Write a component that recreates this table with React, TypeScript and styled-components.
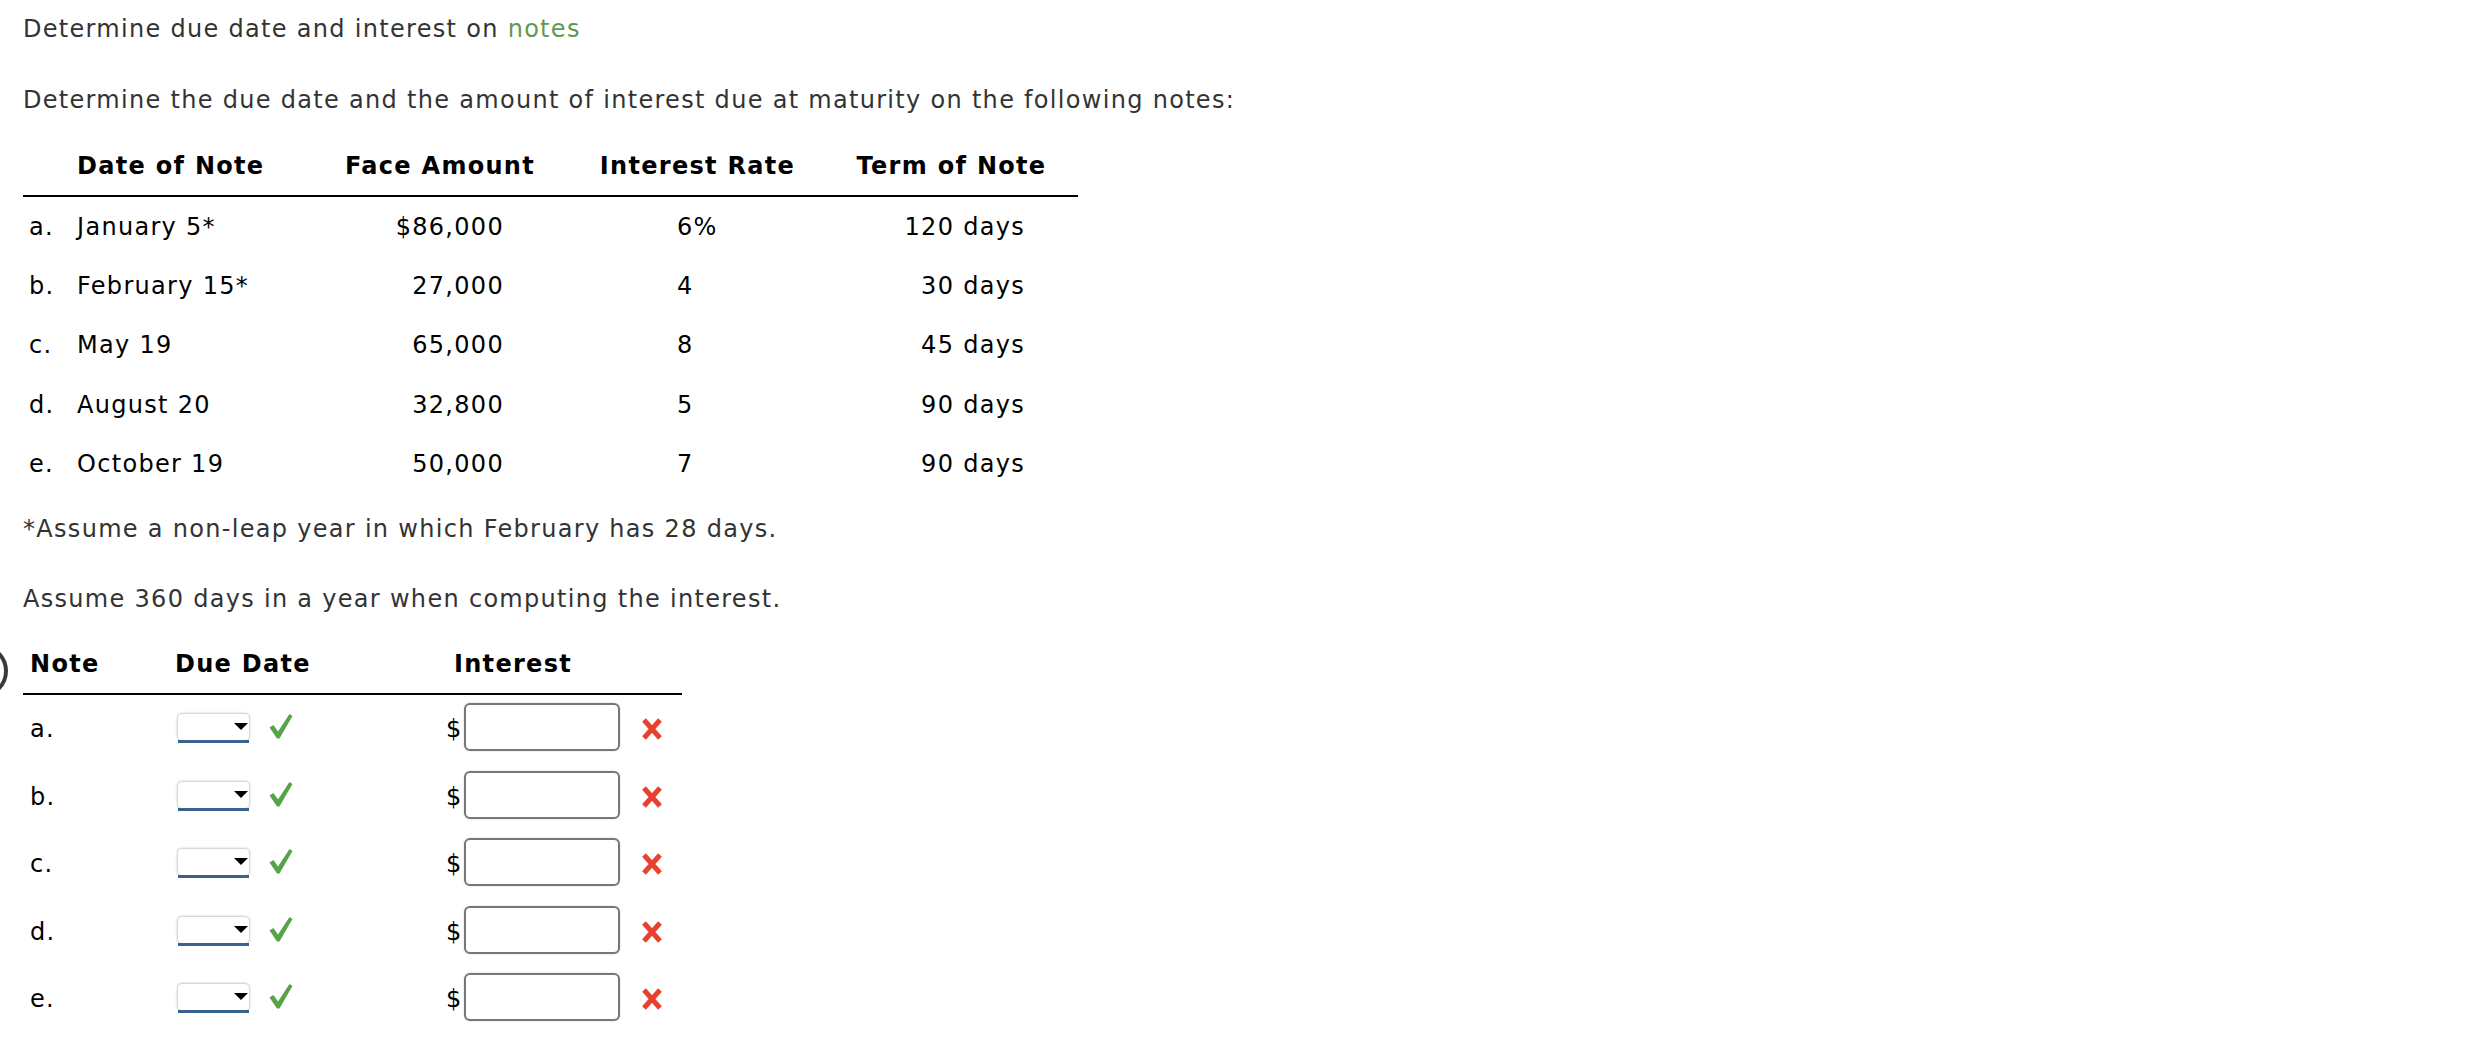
import React from "react";
import styled, { createGlobalStyle } from "styled-components";

const Global = createGlobalStyle`
  html, body { margin: 0; padding: 0; background: #fff; }
  body {
    font-family: "DejaVu Sans", Verdana, sans-serif;
    font-size: 24px;
    letter-spacing: 1.3px;
    color: #333;
  }
`;

const Page = styled.div`
  position: relative;
  padding: 14px 0 0 23px;
  width: 2467px;
  min-height: 1030px;
`;

const EdgeRing = styled.div`
  position: absolute;
  left: -46px;
  top: 644px;
  width: 46px;
  height: 46px;
  border: 4px solid #3a3a3a;
  border-radius: 50%;
`;

const Text = styled.p<{ $mt: number }>`
  margin: ${(p) => p.$mt}px 0 0 0;
  line-height: 30px;
  color: #333;
  white-space: nowrap;
`;

const Glossary = styled.span`
  color: #5e9a4e;
`;

const Table = styled.div<{ $cols: string; $width: number; $mt: number }>`
  display: grid;
  grid-template-columns: ${(p) => p.$cols};
  width: ${(p) => p.$width}px;
  margin-top: ${(p) => p.$mt}px;
  color: #000;
`;

const HeadCell = styled.div<{ $align: string; $pl?: number }>`
  font-weight: bold;
  line-height: 30px;
  padding: 0 0 14px ${(p) => p.$pl ?? 0}px;
  text-align: ${(p) => p.$align};
  border-bottom: 2px solid #000;
  white-space: nowrap;
`;

const Cell = styled.div<{ $h: number; $justify: string; $pl?: number; $pr?: number }>`
  height: ${(p) => p.$h}px;
  display: flex;
  align-items: center;
  justify-content: ${(p) => p.$justify};
  padding-left: ${(p) => p.$pl ?? 0}px;
  padding-right: ${(p) => p.$pr ?? 0}px;
  white-space: nowrap;
`;

const Letter = styled.span`
  display: inline-block;
  width: 48px;
`;

const Select = styled.div`
  position: relative;
  width: 71px;
  height: 26px;
  margin-top: -4px;
  background: #fff;
  border-radius: 4px;
  box-shadow: 0 0 3px rgba(0, 0, 0, 0.45);
  &::after {
    content: "";
    position: absolute;
    left: 0;
    right: 0;
    bottom: -3px;
    height: 3px;
    background: #3b6190;
  }
`;

const Arrow = styled.span`
  position: absolute;
  right: 1px;
  top: 9px;
  width: 0;
  height: 0;
  border-left: 7px solid transparent;
  border-right: 7px solid transparent;
  border-top: 7px solid #000;
`;

const Check = styled.svg`
  margin-left: 20px;
  margin-top: -6px;
`;

const Dollar = styled.span`
  color: #000;
  margin-right: 1px;
`;

const Input = styled.div`
  width: 152px;
  height: 44px;
  border: 2px solid #777;
  border-radius: 6px;
  background: #fff;
  box-shadow: 0 0 2px rgba(0, 0, 0, 0.2);
  margin-top: -4px;
`;

const Cross = styled.svg`
  margin-left: 21px;
`;

const rows1 = [
  ["a.", "January 5*", "$86,000", "6%", "120 days"],
  ["b.", "February 15*", "27,000", "4", "30 days"],
  ["c.", "May 19", "65,000", "8", "45 days"],
  ["d.", "August 20", "32,800", "5", "90 days"],
  ["e.", "October 19", "50,000", "7", "90 days"],
];

const CheckIcon = () => (
  <Check width="24" height="26" viewBox="0 0 24 26">
    <path d="M0.5 14.5 L4.5 12 L9 18.5 L20.5 1 L23.5 3 L10.5 25.5 L8 25.5 Z" fill="#56a447" />
  </Check>
);

const CrossIcon = () => (
  <Cross width="22" height="22" viewBox="0 0 22 22">
    <path d="M3 2 L19 20 M19 2 L3 20" stroke="#e8412e" strokeWidth="5" strokeLinecap="butt" />
  </Cross>
);

export default function App() {
  return (
    <>
      <Global />
      <Page>
        <EdgeRing />
        <Text $mt={0}>
          Determine due date and interest on <Glossary>notes</Glossary>
        </Text>
        <Text $mt={41}>
          Determine the due date and the amount of interest due at maturity on the following notes:
        </Text>

        <Table $cols="287px 260px 255px 253px" $width={1055} $mt={36}>
          <HeadCell $align="left" $pl={54}>Date of Note</HeadCell>
          <HeadCell $align="center">Face Amount</HeadCell>
          <HeadCell $align="center">Interest Rate</HeadCell>
          <HeadCell $align="center">Term of Note</HeadCell>
          {rows1.map((r) => (
            <React.Fragment key={r[0]}>
              <Cell $h={59.3} $justify="flex-start" $pl={6}>
                <Letter>{r[0]}</Letter>
                {r[1]}
              </Cell>
              <Cell $h={59.3} $justify="flex-end" $pr={66}>{r[2]}</Cell>
              <Cell $h={59.3} $justify="flex-start" $pl={107}>{r[3]}</Cell>
              <Cell $h={59.3} $justify="flex-end" $pr={53}>{r[4]}</Cell>
            </React.Fragment>
          ))}
        </Table>

        <Text $mt={21}>*Assume a non-leap year in which February has 28 days.</Text>
        <Text $mt={40}>Assume 360 days in a year when computing the interest.</Text>

        <Table $cols="147px 250px 262px" $width={659} $mt={35}>
          <HeadCell $align="left" $pl={7}>Note</HeadCell>
          <HeadCell $align="left" $pl={5}>Due Date</HeadCell>
          <HeadCell $align="left" $pl={34}>Interest</HeadCell>
          {["a.", "b.", "c.", "d.", "e."].map((l) => (
            <React.Fragment key={l}>
              <Cell $h={67.5} $justify="flex-start" $pl={7}>{l}</Cell>
              <Cell $h={67.5} $justify="flex-start" $pl={8}>
                <Select>
                  <Arrow />
                </Select>
                <CheckIcon />
              </Cell>
              <Cell $h={67.5} $justify="flex-start" $pl={26}>
                <Dollar>$</Dollar>
                <Input />
                <CrossIcon />
              </Cell>
            </React.Fragment>
          ))}
        </Table>
      </Page>
    </>
  );
}
